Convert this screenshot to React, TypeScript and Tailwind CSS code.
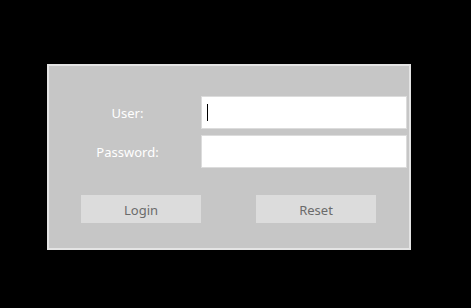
export default function App() {
  return (
    <main className="w-[471px] h-[308px] bg-black pt-[64px] pl-[47px] font-['Noto_Sans',sans-serif]">
      {/* Login panel */}
      <div className="w-[364px] h-[186px] border-2 border-[#e4e4e4] bg-[#c6c6c6] pt-[30px] pr-[2px]">
        <div className="flex items-center h-[33px]">
          <label className="w-[152px] pl-[5px] pt-[3px] text-center text-[13px] text-white">User:</label>
          <div className="w-[206px] h-[33px] bg-white border border-[#dcdcdc] flex items-center pl-[5px]">
            <div className="w-px h-[17px] bg-black"></div>
          </div>
        </div>
        <div className="flex items-center h-[33px] mt-[6px]">
          <label className="w-[152px] pl-[5px] pt-[3px] text-center text-[13px] text-white">Password:</label>
          <input
            type="password"
            className="w-[206px] h-[33px] bg-white border border-[#dcdcdc] outline-none"
          />
        </div>
        <div className="flex mt-[27px] pl-[32px] gap-[55px]">
          <button className="w-[120px] h-[28px] pt-[3px] bg-[#dcdcdc] text-[13px] text-[#6b6b6b]">Login</button>
          <button className="w-[120px] h-[28px] pt-[3px] bg-[#dcdcdc] text-[13px] text-[#6b6b6b]">Reset</button>
        </div>
      </div>
    </main>
  );
}
